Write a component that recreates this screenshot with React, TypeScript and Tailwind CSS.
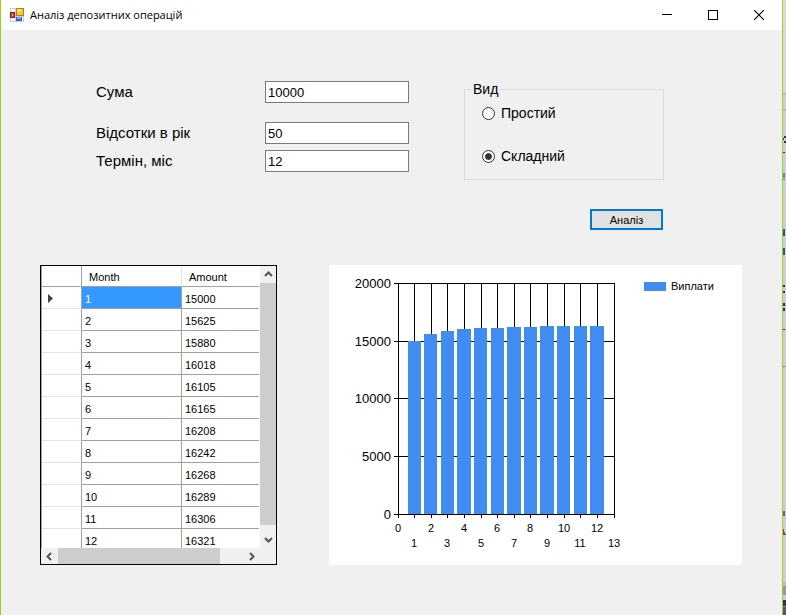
import type { ReactNode } from "react";

const rows = [
  15000, 15625, 15880, 16018, 16105, 16165, 16208, 16242, 16268, 16289, 16306, 16321,
].map((amount, i) => ({ month: i + 1, amount }));

const LEFT = 69;
const RIGHT = 285;
const TOP = 18;
const BASE = 249;
const STEP = (RIGHT - LEFT) / 13;

const xAt = (n: number) => Math.floor(LEFT + n * STEP);
const yAt = (v: number) => Math.round(BASE - 0.1 - (v * (BASE - TOP)) / 20000);
const barTop = (v: number) => Math.round(BASE + 0.21 - (v * (BASE - TOP)) / 20000);
const barLeft = (n: number) => Math.floor(LEFT + (n - 0.4) * STEP + 0.1);
const barRight = (n: number) => Math.floor(LEFT + (n + 0.4) * STEP + 0.1);

function AppIcon() {
  return (
    <svg width="14" height="14" viewBox="0 0 14 14" shapeRendering="crispEdges" aria-hidden="true">
      <rect width="14" height="14" fill="#c9ccd2" />
      <rect x="1" y="1" width="4" height="3" fill="#fff" />
      <rect x="1" y="10" width="4" height="3" fill="#fff" />
      <rect x="12" y="9" width="1" height="4" fill="#fff" />
      <rect x="6" y="0" width="8" height="8" fill="#b08414" />
      <rect x="7" y="1" width="6" height="6" fill="#fbc42f" />
      <rect x="7" y="1" width="4" height="3" fill="#ffe27a" />
      <rect x="0" y="4" width="5" height="6" fill="#8e1c16" />
      <rect x="1" y="5" width="3" height="4" fill="#c9473c" />
      <rect x="2" y="6" width="1" height="2" fill="#ef9a8c" />
      <rect x="6" y="9" width="6" height="4" fill="#2f68c8" />
      <rect x="7" y="9" width="4" height="2" fill="#7eaef2" />
    </svg>
  );
}

function TitleBar() {
  return (
    <header className="flex h-[30px] items-center bg-white pl-[9px] font-['Open_Sans','Noto_Sans',sans-serif]">
      <AppIcon />
      <h1 className="ml-1.5 flex-1 text-[11px] leading-4">Аналіз депозитних операцій</h1>
      <button aria-label="Згорнути" className="flex h-full w-[46px] items-center justify-center">
        <svg width="10" height="10" shapeRendering="crispEdges"><path d="M0 4.5h10" stroke="#000" /></svg>
      </button>
      <button aria-label="Розгорнути" className="flex h-full w-[46px] items-center justify-center">
        <svg width="10" height="10" shapeRendering="crispEdges"><rect x=".5" y=".5" width="9" height="9" fill="none" stroke="#000" /></svg>
      </button>
      <button aria-label="Закрити" className="flex h-full w-[46px] items-center justify-center">
        <svg width="10" height="10"><path d="M0 0l10 10M10 0L0 10" stroke="#000" strokeWidth="1.1" /></svg>
      </button>
    </header>
  );
}

function Field({ id, label, value }: { id: string; label: string; value: string }) {
  return (
    <div className="flex items-center">
      <label htmlFor={id} className="w-[169px] text-[15px] leading-5">{label}</label>
      <input
        id={id}
        defaultValue={value}
        className="h-[22px] w-36 border border-[#7a7a7a] bg-white px-0.5 text-[13px] leading-5 outline-none"
      />
    </div>
  );
}

function Radio({ label, checked }: { label: string; checked?: boolean }) {
  return (
    <label className="flex items-center gap-1.5 text-sm leading-5">
      <input
        type="radio"
        name="kind"
        defaultChecked={checked}
        className="size-[13px] appearance-none rounded-full border border-[#333] bg-white bg-clip-content p-0.5 shadow-[inset_0_0_0_2px_#fff] checked:bg-[#333]"
      />
      {label}
    </label>
  );
}

function ScrollButton({ label, d, className }: { label: string; d: string; className: string }) {
  return (
    <button aria-label={label} className={`flex shrink-0 items-center justify-center ${className}`}>
      <svg width="9" height="9" viewBox="0 0 9 9"><path d={d} fill="none" stroke="#555" strokeWidth="2" /></svg>
    </button>
  );
}

function HeaderCell({ children, className }: { children?: ReactNode; className: string }) {
  return <th className={`border-b border-[#a0a0a0] p-0 pt-0.5 pl-[7px] text-left font-normal ${className}`}>{children}</th>;
}

function DataGrid() {
  return (
    <div className="flex h-[300px] w-[237px] shrink-0 border border-black bg-[#f0f0f0] text-[11px] leading-4">
      <div className="flex min-w-0 flex-1 flex-col">
        <div className="min-h-0 flex-1 overflow-hidden bg-white pr-px">
          <table className="w-full table-fixed border-separate border-spacing-0 border-l border-[#a0a0a0]">
            <colgroup>
              <col className="w-10" />
              <col className="w-[100px]" />
              <col />
            </colgroup>
            <thead>
              <tr className="h-[21px]">
                <HeaderCell className="border-r" />
                <HeaderCell className="border-r border-r-[#e3e3e3]">Month</HeaderCell>
                <HeaderCell className="">Amount</HeaderCell>
              </tr>
            </thead>
            <tbody>
              {rows.map(({ month, amount }, i) => (
                <tr key={month} className="h-[22px]">
                  <td className="border-r border-b border-r-[#a0a0a0] border-b-[#e3e3e3] p-0 pt-0.5 pl-1.5">
                    {i === 0 && (
                      <svg width="5" height="9" viewBox="0 0 5 9" className="block"><path d="M0 0l5 4.5L0 9z" fill="#404040" /></svg>
                    )}
                  </td>
                  <td className={`border-r border-b border-[#a0a0a0] p-0 pt-0.5 pl-[3px] ${i === 0 ? "bg-[#3399ff] text-white" : ""}`}>{month}</td>
                  <td className="border-b border-[#a0a0a0] p-0 pt-0.5 pl-[3px]">{amount}</td>
                </tr>
              ))}
            </tbody>
          </table>
        </div>
        <div className="flex h-4 shrink-0">
          <ScrollButton label="Ліворуч" d="M6 1L2.5 4.5L6 8" className="w-[17px]" />
          <div className="w-[162px] bg-[#cdcdcd]" />
          <div className="flex-1" />
          <ScrollButton label="Праворуч" d="M3 1l3.5 3.5L3 8" className="w-[17px]" />
        </div>
      </div>
      <div className="flex w-4 shrink-0 flex-col pb-4">
        <ScrollButton label="Вгору" d="M1 6l3.5-3.5L8 6" className="h-[17px]" />
        <div className="h-[242px] bg-[#cdcdcd]" />
        <div className="flex-1" />
        <ScrollButton label="Вниз" d="M1 3l3.5 3.5L8 3" className="h-[17px]" />
      </div>
    </div>
  );
}

function Chart() {
  const xs = Array.from({ length: 14 }, (_, n) => n);
  const ys = [0, 5000, 10000, 15000, 20000];
  return (
    <section aria-label="Виплати" className="flex h-[300px] min-w-0 flex-1 bg-white text-[11px]">
      <svg width="300" height="300" className="shrink-0">
        <g fill="#000" shapeRendering="crispEdges">
          {xs.map((n) => <rect key={n} x={xAt(n)} y={TOP} width="1" height={BASE - TOP + 4} />)}
          {ys.map((v) => <rect key={v} x={LEFT - 4} y={yAt(v)} width={RIGHT - LEFT + 5} height="1" />)}
        </g>
        <g fill="#418cf0" shapeRendering="crispEdges">
          {rows.map(({ month, amount }) => (
            <rect key={month} x={barLeft(month)} y={barTop(amount)} width={barRight(month) - barLeft(month)} height={BASE - barTop(amount)} />
          ))}
        </g>
        <g fontSize="13" textAnchor="end">
          {ys.map((v) => <text key={v} x="62" y={yAt(v) + 5}>{v}</text>)}
        </g>
        <g textAnchor="middle">
          {xs.map((n) => <text key={n} x={xAt(n)} y={n % 2 ? 282 : 267}>{n}</text>)}
        </g>
      </svg>
      <div className="ml-[15px] flex h-5 items-center gap-[5px] pt-[21px]">
        <span className="h-[9px] w-[22px] bg-[#418cf0]" />
        <span className="leading-5">Виплати</span>
      </div>
    </section>
  );
}

function BackdropEdge() {
  return (
    <div className="w-[3px] shrink-0 overflow-hidden bg-[#cfcfcf]">
      <svg width="3" height="615" shapeRendering="crispEdges" aria-hidden="true">
        <rect width="3" height="92" fill="#dadada" />
        <path d="M0 93.5h3M0 109.5h3" stroke="#bdbdbd" strokeWidth="2" />
        <path d="M1 136h2v2h-2zM0 138h1v2H0zM1 141h2v2h-2zM0 152h2v1H0zM1 287h2M0 285h2v2H0zM0 291h2v2H0zM0 303h2v3H0zM0 308h2v3H0zM0 329h2v1H0z" fill="#163a63" />
        <path d="M0 173h2v5H0zM0 179h2v1H0zM0 366h2v1H0z" fill="#3c9cc0" />
        <path d="M0 229h2v7H0zM0 248h2v7H0z" fill="#245a86" />
        <path d="M0 511h2v5H0z" fill="#85508a" />
        <path d="M0 528l3 7H0z" fill="#a8325a" />
        <rect y="582" width="3" height="4" fill="#bcbcbc" />
        <rect y="586" width="3" height="9" fill="#999" />
        <rect y="600" width="3" height="15" fill="#24384f" />
        <rect y="606" width="3" height="1" fill="#8996a3" />
        <rect y="607" width="3" height="8" fill="#4b5a69" />
      </svg>
    </div>
  );
}

export default function App() {
  return (
    <div className="flex min-h-screen bg-[#f0f0f0] font-['Liberation_Sans',Arial,sans-serif] text-black">
      <div className="min-w-0 flex-1 border-x border-[#9ad31c]">
        <TitleBar />
        <main className="pt-[51px] pr-10 pl-[39px]">
          <form className="flex pl-14" onSubmit={(e) => e.preventDefault()}>
            <div className="flex flex-col">
              <Field id="sum" label="Сума" value="10000" />
              <div className="mt-[19px] flex flex-col gap-1.5">
                <Field id="rate" label="Відсотки в рік" value="50" />
                <Field id="term" label="Термін, міс" value="12" />
              </div>
            </div>
            <div className="ml-[55px] flex w-[200px] flex-col">
              <fieldset className="h-[99px] border border-[#dcdcdc] pl-[17px]">
                <legend className="-ml-[11px] px-0.5 text-sm leading-4">Вид</legend>
                <div className="flex flex-col gap-[23px] pt-1.5">
                  <Radio label="Простий" />
                  <Radio label="Складний" checked />
                </div>
              </fieldset>
              <button className="mt-[29px] mr-px h-[21px] w-[73px] self-end border-2 border-[#0078d7] bg-[#e1e1e1] text-[11px] leading-4">
                Аналіз
              </button>
            </div>
          </form>
          <div className="mt-[35px] flex gap-[52px]">
            <DataGrid />
            <Chart />
          </div>
        </main>
      </div>
      <BackdropEdge />
    </div>
  );
}
